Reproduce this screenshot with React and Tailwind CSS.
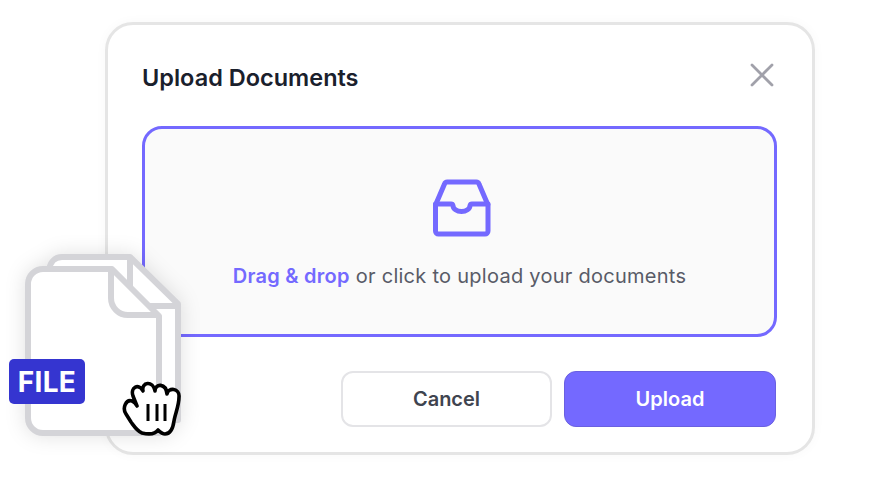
export default function App() {
  return (
    <div className="relative w-[893px] h-[491px] bg-white overflow-hidden font-['Inter',sans-serif]">
      <div className="ml-[105px] pt-[22px]">
        <div className="w-[710px] h-[433px] border-[3px] border-[#e5e5e5] rounded-[28px] bg-white px-[34px] pt-[33px] shadow-[0_0_12px_rgba(0,0,0,0.03)]">
          <div className="flex items-center justify-between h-[40px]">
            <h1 className="text-[23.5px] font-semibold text-[#1a202c]">Upload Documents</h1>
            <svg width="26" height="26" viewBox="0 0 26 26" className="mr-[3px] mb-[6px]" fill="none" stroke="#a1a1aa" strokeWidth="2.8" strokeLinecap="round">
              <path d="M3 3L23 23M23 3L3 23" />
            </svg>
          </div>
          <div className="mt-[28px] w-[635px] h-[211px] border-[3px] border-[#7469ff] rounded-[20px] bg-[#fafafa] flex flex-col items-center">
            <svg width="60" height="60" viewBox="0 0 60 60" className="mt-[48px] ml-[2px]" fill="none" stroke="#7469ff" strokeWidth="5" strokeLinejoin="round" strokeLinecap="round">
              <path d="M4.5 28V54a3 3 0 0 0 3 3H54a3 3 0 0 0 3-3V28L48 7a3 3 0 0 0-3-2H16.5a3 3 0 0 0-3 2Z" />
              <path d="M4.5 27H20a2 2 0 0 1 2 1.5a8.5 6 0 0 0 17 0a2 2 0 0 1 2-1.5H57" />
            </svg>
            <p className="mt-[24px] text-[20px] text-[#585b67] tracking-[0.27px]">
              <span className="font-semibold text-[#7469ff]">Drag &amp; drop</span> or click to upload your documents
            </p>
          </div>
          <div className="mt-[34px] flex justify-end gap-[12px] w-[634px]">
            <button className="w-[211px] h-[56px] rounded-[12px] border-2 border-[#e4e4e7] bg-white text-[20px] font-semibold text-[#3f444f]">Cancel</button>
            <button className="w-[212px] h-[56px] rounded-[12px] border border-[#6a60e0] bg-[#7469ff] text-[20px] font-semibold text-white">Upload</button>
          </div>
        </div>
      </div>

      <svg className="absolute left-0 top-[240px] drop-shadow-[0_0_10px_rgba(0,0,0,0.12)]" width="200" height="210" viewBox="0 240 200 210" fill="none">
        <path d="M49 270C50 262 55 257 62 257H130L178 304V420H60Z" fill="#fff" stroke="#d4d4d8" strokeWidth="6" strokeLinejoin="round" />
        <path d="M130 257V290M150 306H178" stroke="#d4d4d8" strokeWidth="6" />
        <path d="M43 269H112L159 316V433H43a15 15 0 0 1-15-15V284a15 15 0 0 1 15-15Z" fill="#fff" stroke="#d4d4d8" strokeWidth="6" strokeLinejoin="round" />
        <path d="M111 270V298a17 17 0 0 0 17 17H159" stroke="#d4d4d8" strokeWidth="6" />
        <path d="M142 433C137 431 134 426 131 422L126 414C122 408 126 399 132 401C134 402 136 404 137 406L133 396C130 387 139 383 143 391C141 382 153 380 155 391C155 383 166 383 167 394C168 387 180 388 179 397C179 406 175 414 174 421C173 428 171 434 165 434C162 434 160 432 158 430C156 433 151 435 142 433Z" fill="#fff" stroke="#000" strokeWidth="3.6" strokeLinejoin="round" />
        <path d="M148 404V421M157 404V421M165 404V421" stroke="#000" strokeWidth="3" />
      </svg>
      <div className="absolute left-[9px] top-[359px] w-[76px] h-[45px] rounded-[5px] bg-[#3535d0] flex items-center justify-center text-[28px] font-bold tracking-[0.3px] text-white">FILE</div>
    </div>
  );
}
